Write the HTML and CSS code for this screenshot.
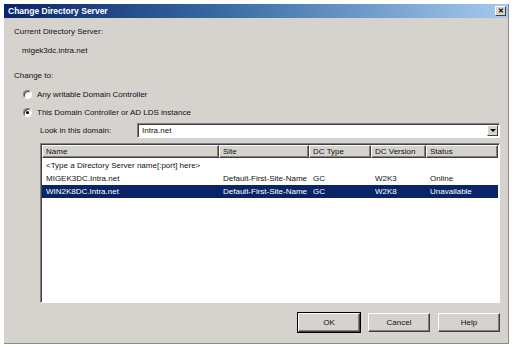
FILE: index.html
```html
<!DOCTYPE html>
<html>
<head>
<meta charset="utf-8">
<link rel="stylesheet" href="styles.css">
</head>
<body>
<div class="window">
  <div class="titlebar">
    <span class="title">Change Directory Server</span>
    <span class="close">&#x2715;</span>
  </div>
  <div class="content">
    <div class="line label">Current Directory Server:</div>
    <div class="line value">migek3dc.intra.net</div>
    <div class="line label change">Change to:</div>
    <div class="radio-row first"><span class="radio"></span><span>Any writable Domain Controller</span></div>
    <div class="radio-row second"><span class="radio checked"></span><span>This Domain Controller or AD LDS instance</span></div>
    <div class="lookin">
      <span class="lookin-label">Look in this domain:</span>
      <div class="combo"><span class="combo-text">Intra.net</span><span class="combo-btn"><span class="tri"></span></span></div>
    </div>
    <div class="listview">
      <div class="lv-row lv-header">
        <div class="hcell">Name</div>
        <div class="hcell">Site</div>
        <div class="hcell">DC Type</div>
        <div class="hcell">DC Version</div>
        <div class="hcell">Status</div>
      </div>
      <div class="lv-row">
        <div class="cell wide">&lt;Type a Directory Server name[:port] here&gt;</div>
      </div>
      <div class="lv-row">
        <div class="cell">MIGEK3DC.Intra.net</div>
        <div class="cell">Default-First-Site-Name</div>
        <div class="cell">GC</div>
        <div class="cell">W2K3</div>
        <div class="cell">Online</div>
      </div>
      <div class="lv-row selected">
        <div class="cell">WIN2K8DC.Intra.net</div>
        <div class="cell">Default-First-Site-Name</div>
        <div class="cell">GC</div>
        <div class="cell">W2K8</div>
        <div class="cell">Unavailable</div>
      </div>
    </div>
    <div class="buttons">
      <div class="btn default">OK</div>
      <div class="btn">Cancel</div>
      <div class="btn">Help</div>
    </div>
  </div>
</div>
</body>
</html>
```

FILE: styles.css
```css
html, body {
  margin: 0;
  padding: 0;
  background: #ffffff;
}
body {
  font-family: "Liberation Sans", Arial, sans-serif;
  font-size: 8px;
  color: #111;
}
.window {
  margin: 4px 0 0 4px;
  width: 505px;
  height: 340px;
  box-sizing: border-box;
  background: #d6d3ce;
  border-right: 1px solid #8c8a86;
  border-bottom: 1px solid #8c8a86;
  display: flex;
  flex-direction: column;
}
.titlebar {
  height: 14px;
  flex: none;
  background: linear-gradient(to right, #0a246a 0%, #3a6ea5 45%, #a6caf0 100%);
  display: flex;
  align-items: center;
  justify-content: space-between;
  padding: 0 2px 0 4px;
}
.title {
  color: #fff;
  font-weight: bold;
  font-size: 8.5px;
}
.close {
  width: 11px;
  height: 10px;
  box-sizing: border-box;
  background: #d6d3ce;
  border: 1px solid;
  border-color: #fff #404040 #404040 #fff;
  font-size: 7px;
  line-height: 8px;
  text-align: center;
  font-weight: bold;
  color: #000;
}
.content {
  flex: 1;
  padding: 8px 8px 0 10px;
  display: flex;
  flex-direction: column;
}
.line {
  height: 12px;
  line-height: 12px;
}
.value {
  margin-top: 7px;
  padding-left: 8px;
}
.change {
  margin-top: 13px;
}
.radio-row {
  display: flex;
  align-items: center;
  gap: 5px;
  height: 12px;
  margin-left: 9px;
}
.radio-row.first { margin-top: 6px; }
.radio-row.second { margin-top: 6px; }
.radio {
  width: 9px;
  height: 9px;
  box-sizing: border-box;
  border-radius: 50%;
  border: 1px solid;
  border-color: #808080 #fff #fff #808080;
  background: #fff;
  box-shadow: inset 1px 1px 0 #404040;
  position: relative;
}
.radio.checked::after {
  content: "";
  position: absolute;
  left: 2px;
  top: 2px;
  width: 3px;
  height: 3px;
  border-radius: 50%;
  background: #000;
}
.lookin {
  margin-top: 5px;
  margin-left: 26px;
  display: flex;
  align-items: center;
  height: 15px;
}
.lookin-label {
  width: 97px;
  flex: none;
}
.combo {
  flex: 1;
  height: 15px;
  box-sizing: border-box;
  background: #fff;
  border: 1px solid;
  border-color: #808080 #fff #fff #808080;
  box-shadow: inset 1px 1px 0 #404040;
  display: flex;
  align-items: center;
  justify-content: space-between;
  padding: 1px 1px 1px 4px;
}
.combo-btn {
  width: 11px;
  height: 11px;
  box-sizing: border-box;
  background: #d6d3ce;
  border: 1px solid;
  border-color: #fff #404040 #404040 #fff;
  display: flex;
  align-items: center;
  justify-content: center;
}
.tri {
  width: 0;
  height: 0;
  border-left: 3px solid transparent;
  border-right: 3px solid transparent;
  border-top: 3px solid #000;
}
.listview {
  margin-top: 5px;
  margin-left: 26px;
  height: 160px;
  box-sizing: border-box;
  background: #fff;
  border: 1px solid;
  border-color: #808080 #fff #fff #808080;
  box-shadow: inset 1px 1px 0 #404040;
  padding: 1px 1px 0 1px;
  display: flex;
  flex-direction: column;
}
.lv-row {
  display: grid;
  grid-template-columns: 177px 90px 62px 55px 1fr;
  height: 13px;
  line-height: 13px;
}
.lv-header {
  height: 13px;
  margin-bottom: 1px;
}
.hcell {
  background: #d6d3ce;
  border: 1px solid;
  border-color: #fff #404040 #404040 #fff;
  box-shadow: inset -1px -1px 0 #808080;
  padding-left: 3px;
  line-height: 11px;
  white-space: nowrap;
  overflow: hidden;
}
.cell {
  padding-left: 4px;
  white-space: nowrap;
  overflow: hidden;
}
.cell.wide {
  grid-column: 1 / -1;
}
.selected {
  background: #0a246a;
  color: #fff;
}
.buttons {
  margin-top: 10px;
  display: flex;
  justify-content: flex-end;
  gap: 8px;
}
.btn {
  width: 62px;
  height: 19px;
  box-sizing: border-box;
  border: 1px solid;
  border-color: #fff #404040 #404040 #fff;
  box-shadow: inset -1px -1px 0 #808080;
  display: flex;
  align-items: center;
  justify-content: center;
  background: #d6d3ce;
}
.btn.default {
  outline: 1px solid #000;
  outline-offset: 0;
}
```
